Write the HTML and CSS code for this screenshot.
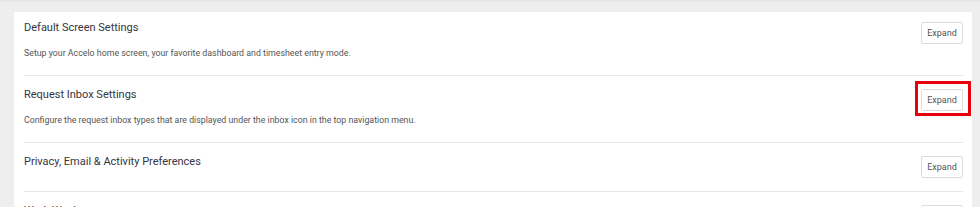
FILE: index.html
```html
<!DOCTYPE html>
<html lang="en">
<head>
<meta charset="utf-8">
<title>Settings</title>
<link rel="stylesheet" href="styles.css">
</head>
<body>
<div class="page">
  <div class="card">
    <div class="row first">
      <div class="info">
        <div class="title">Default Screen Settings</div>
        <div class="desc">Setup your Accelo home screen, your favorite dashboard and timesheet entry mode.</div>
      </div>
      <button class="btn">Expand</button>
    </div>
    <div class="row">
      <div class="info">
        <div class="title">Request Inbox Settings</div>
        <div class="desc">Configure the request inbox types that are displayed under the inbox icon in the top navigation menu.</div>
      </div>
      <button class="btn highlighted">Expand</button>
    </div>
    <div class="row">
      <div class="info">
        <div class="title">Privacy, Email &amp; Activity Preferences</div>
      </div>
      <button class="btn">Expand</button>
    </div>
    <div class="row">
      <div class="info">
        <div class="title">Work Week</div>
      </div>
      <button class="btn">Expand</button>
    </div>
  </div>
</div>
</body>
</html>
```
FILE: styles.css
```css
html, body {
  margin: 0;
  padding: 0;
}
body {
  background: #eeeeee;
  font-family: Roboto, "Liberation Sans", sans-serif;
  border-top: 2px solid #e6e6e6;
}
.page {
  padding: 10px 8px 0 14px;
}
.card {
  background: #ffffff;
  padding: 0 9px 0 10px;
}
.row {
  display: flex;
  justify-content: space-between;
  align-items: flex-start;
  padding: 12px 0 13px;
  border-bottom: 1px solid #e7e7e7;
}
.row.first {
  padding-top: 9px;
}
.title {
  margin-top: 1px;
  font-size: 11px;
  line-height: 12px;
  color: #35353d;
}
.desc {
  margin-top: 13px;
  margin-bottom: 3px;
  font-size: 8.8px;
  line-height: 12px;
  color: #555555;
}
.btn {
  position: relative;
  margin-top: 1px;
  width: 42px;
  height: 22px;
  padding: 0;
  background: #ffffff;
  border: 1px solid #dcdcdc;
  border-radius: 2px;
  font-family: Roboto, "Liberation Sans", sans-serif;
  font-size: 9px;
  color: #555555;
}
.highlighted::after {
  content: "";
  position: absolute;
  left: -7px;
  top: -9px;
  right: -9px;
  bottom: -6px;
  border: 3px solid #e8000b;
}
```
